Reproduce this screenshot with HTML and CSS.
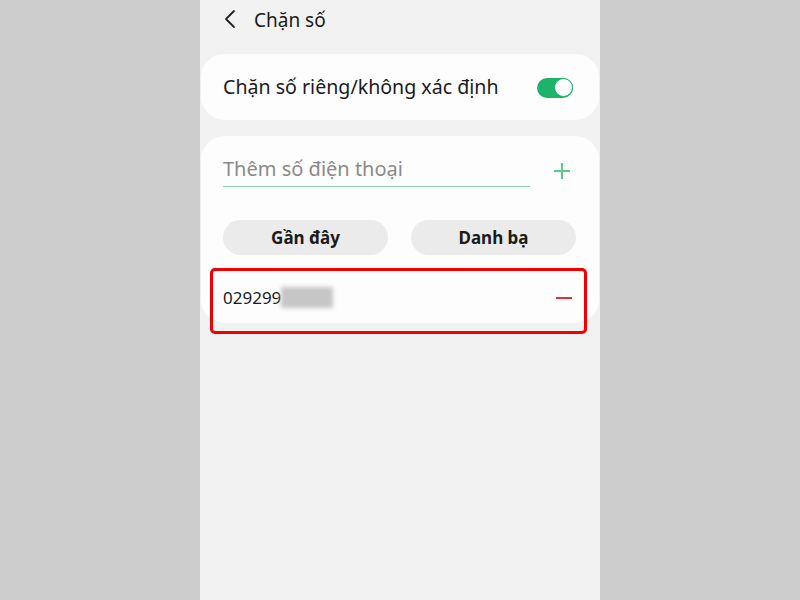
FILE: index.html
```html
<!DOCTYPE html>
<html lang="vi">
<head>
<meta charset="utf-8">
<link rel="stylesheet" href="styles.css">
</head>
<body>
<div class="phone">
  <div class="header">
    <svg class="back" width="14" height="20" viewBox="0 0 14 20"><path d="M11 2 L3 10 L11 18" fill="none" stroke="#222" stroke-width="1.8" stroke-linecap="round" stroke-linejoin="round"/></svg>
    <span class="title">Chặn số</span>
  </div>
  <div class="card card-toggle">
    <span class="label">Chặn số riêng/không xác định</span>
    <span class="switch"><span class="knob"></span></span>
  </div>
  <div class="card card-list">
    <div class="input-row">
      <div class="input">Thêm số điện thoại</div>
      <svg class="plus" width="18" height="18" viewBox="0 0 18 18"><path d="M9 1 V17 M1 9 H17" stroke="#5cc98f" stroke-width="2"/></svg>
    </div>
    <div class="buttons">
      <div class="btn">Gần đây</div>
      <div class="btn">Danh bạ</div>
    </div>
    <div class="item">
      <span class="number">029299</span>
      <span class="blur"></span>
      <span class="minus"></span>
    </div>
  </div>
  <div class="highlight"></div>
</div>
</body>
</html>
```
FILE: styles.css
```css
html, body {
  margin: 0;
  padding: 0;
  background: #cdcdcd;
}
body {
  font-family: "Noto Sans", Roboto, "Liberation Sans", sans-serif;
  color: #1b1b1b;
}
.phone {
  position: relative;
  width: 400px;
  height: 600px;
  margin: 0 auto;
  background: #f2f2f2;
  overflow: hidden;
}
.header {
  height: 40px;
  display: flex;
  align-items: center;
  padding-left: 23px;
}
.back {
  margin-top: -2px;
}
.title {
  margin-left: 17px;
  font-size: 19px;
  margin-top: -1px;
}
.card {
  background: #fdfdfd;
  margin: 0 1px;
  border-radius: 24px;
}
.card-toggle {
  margin-top: 14px;
  height: 66px;
  display: flex;
  align-items: center;
  justify-content: space-between;
  padding: 0 26px 0 22px;
}
.label {
  font-size: 19.6px;
  margin-top: -1px;
}
.switch {
  position: relative;
  width: 36px;
  height: 20px;
  border-radius: 10px;
  background: #1db46a;
  margin-top: 1px;
}
.knob {
  position: absolute;
  right: 0;
  top: 0;
  width: 17px;
  height: 17px;
  border-radius: 50%;
  background: #fff;
  border: 1.5px solid #1db46a;
}
.card-list {
  margin-top: 16px;
  height: 187px;
  padding: 0 22px;
}
.input-row {
  display: flex;
  align-items: flex-end;
  padding-top: 17px;
  height: 34px;
}
.input {
  width: 307px;
  font-size: 20px;
  color: #8a8a8a;
  border-bottom: 1.5px solid #8ad0b6;
  padding-bottom: 2px;
  line-height: 30px;
}
.plus {
  margin-left: 23px;
  margin-bottom: 7px;
}
.buttons {
  display: flex;
  gap: 23px;
  margin-top: 33px;
}
.btn {
  flex: 0 0 165px;
  height: 35px;
  border-radius: 18px;
  background: #ebebeb;
  display: flex;
  align-items: center;
  justify-content: center;
  font-size: 17px;
  font-weight: 700;
  color: #1b1b1b;
}
.item {
  margin-top: 12px;
  padding-top: 6px;
  height: 49px;
  display: flex;
  align-items: center;
}
.number {
  font-size: 17px;
}
.blur {
  width: 52px;
  height: 21px;
  background: #c6c6c6;
  filter: blur(2px);
}
.minus {
  margin-left: auto;
  margin-right: 5px;
  width: 16px;
  height: 2px;
  background: #e53030;
}
.highlight {
  position: absolute;
  left: 10px;
  top: 268px;
  width: 371px;
  height: 60px;
  border: 3px solid #f20000;
  border-radius: 5px;
}
```
